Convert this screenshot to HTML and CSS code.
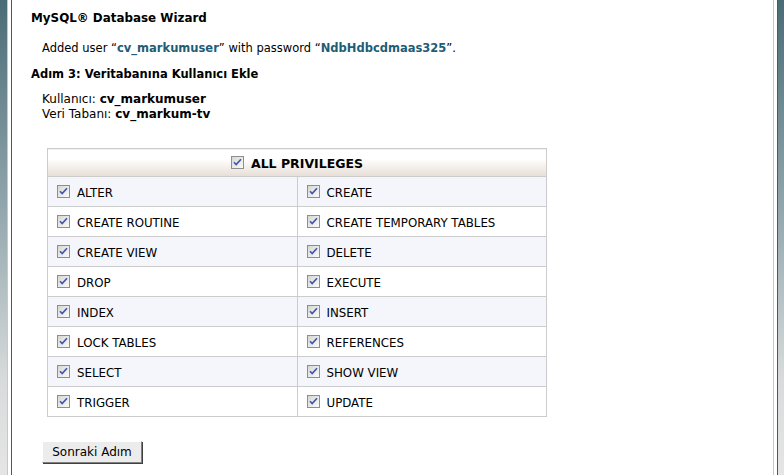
FILE: index.html
```html
<!DOCTYPE html>
<html lang="tr">
<head>
    <meta charset="UTF-8">
    <title>MySQL Database Wizard</title>
    <link rel="stylesheet" href="styles.css">
</head>
<body>

<svg width="0" height="0" class="defs">
    <defs>
        <linearGradient id="cbFill" x1="0" y1="0" x2="1" y2="1">
            <stop offset="0" stop-color="#d6d6d0"/>
            <stop offset="1" stop-color="#fbfbfb"/>
        </linearGradient>
    </defs>
    <symbol id="cb" viewBox="0 0 13 13">
        <rect x="0.5" y="0.5" width="12" height="12" fill="url(#cbFill)" stroke="#8c8e90"/>
        <path d="M3 6.2 L5.2 8.6 L10 3.2" fill="none" stroke="#4457ad" stroke-width="1.7"/>
    </symbol>
</svg>

<div class="page">
    <div class="rail rail-left"></div>
    <div class="frame">
        <div class="panel">
            <h1>MySQL&reg; Database Wizard</h1>
            <p class="notice">Added user &ldquo;<b>cv_markumuser</b>&rdquo; with password &ldquo;<b>NdbHdbcdmaas325</b>&rdquo;.</p>

            <h2>Adım 3: Veritabanına Kullanıcı Ekle</h2>
            <p class="info">
                Kullanıcı: <b>cv_markumuser</b><br>
                Veri Tabanı: <b>cv_markum-tv</b>
            </p>

            <table class="privs">
                <tr>
                    <th colspan="2"><svg class="cb"><use href="#cb"/></svg>ALL PRIVILEGES</th>
                </tr>
                <tr class="odd">
                    <td><svg class="cb"><use href="#cb"/></svg>ALTER</td>
                    <td><svg class="cb"><use href="#cb"/></svg>CREATE</td>
                </tr>
                <tr>
                    <td><svg class="cb"><use href="#cb"/></svg>CREATE ROUTINE</td>
                    <td><svg class="cb"><use href="#cb"/></svg>CREATE TEMPORARY TABLES</td>
                </tr>
                <tr class="odd">
                    <td><svg class="cb"><use href="#cb"/></svg>CREATE VIEW</td>
                    <td><svg class="cb"><use href="#cb"/></svg>DELETE</td>
                </tr>
                <tr>
                    <td><svg class="cb"><use href="#cb"/></svg>DROP</td>
                    <td><svg class="cb"><use href="#cb"/></svg>EXECUTE</td>
                </tr>
                <tr class="odd">
                    <td><svg class="cb"><use href="#cb"/></svg>INDEX</td>
                    <td><svg class="cb"><use href="#cb"/></svg>INSERT</td>
                </tr>
                <tr>
                    <td><svg class="cb"><use href="#cb"/></svg>LOCK TABLES</td>
                    <td><svg class="cb"><use href="#cb"/></svg>REFERENCES</td>
                </tr>
                <tr class="odd">
                    <td><svg class="cb"><use href="#cb"/></svg>SELECT</td>
                    <td><svg class="cb"><use href="#cb"/></svg>SHOW VIEW</td>
                </tr>
                <tr>
                    <td><svg class="cb"><use href="#cb"/></svg>TRIGGER</td>
                    <td><svg class="cb"><use href="#cb"/></svg>UPDATE</td>
                </tr>
            </table>

            <button class="next">Sonraki Adım</button>
        </div>
    </div>
    <div class="rail rail-right"></div>
</div>

</body>
</html>
```

FILE: styles.css
```css
html, body {
    margin: 0;
    height: 100%;
}

body {
    font-family: "DejaVu Sans", Verdana, sans-serif;
    font-size: 12px;
    color: #000;
    background: #fff;
}

.defs {
    position: absolute;
}

.page {
    display: flex;
    height: 100vh;
}

.rail {
    background: linear-gradient(#4a6c76, #94a8ae 45%, #d8dbdc 80%, #e5e5e5);
}

.rail-left {
    width: 7px;
}

.rail-right {
    width: 6px;
}

.frame {
    flex: 1;
    display: flex;
    padding: 0 3px;
    border-left: 1px solid #c8c8c8;
    border-right: 1px solid #555;
}

.panel {
    flex: 1;
    padding: 10px 0 0 19px;
    border-left: 1px solid #555;
    border-right: 1px solid #c8c8c8;
    background: #fff;
}

h1 {
    font-size: 11.9px;
    font-weight: bold;
    margin: 0 0 13px;
    line-height: 17px;
}

.notice {
    font-size: 11.5px;
    margin: 0 0 10px 11px;
    line-height: 16px;
}

.notice b {
    color: #1d5d76;
}

h2 {
    font-size: 11.5px;
    font-weight: bold;
    margin: 0 0 10px;
    line-height: 16px;
}

.info {
    margin: 0 0 26px 11px;
    line-height: 15px;
}

.privs {
    margin-left: 16px;
    width: 500px;
    border-collapse: collapse;
    font-size: 11.8px;
}

.privs th,
.privs td {
    border: 1px solid #cccccc;
    height: 27px;
    padding: 2px 0 0;
}

.privs th {
    height: 25px;
    font-size: 12.5px;
    text-align: center;
    background: linear-gradient(#ffffff 35%, #e7ddd6);
}

.privs td {
    width: 50%;
    padding-left: 9px;
}

.privs tr.odd td {
    background: #f4f6fb;
}

.cb {
    width: 13px;
    height: 13px;
    vertical-align: -1px;
    margin-right: 7px;
}

.next {
    margin: 24px 0 0 11px;
    width: 100px;
    height: 22px;
    padding: 0;
    font-family: "DejaVu Sans", Verdana, sans-serif;
    font-size: 12px;
    color: #000;
    background: #ececec;
    border: 1px solid;
    border-color: #fff #808080 #808080 #fff;
    box-shadow: 1px 1px 0 #404040;
}
```
